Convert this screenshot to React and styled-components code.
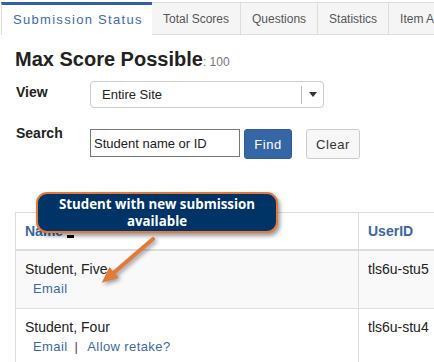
import styled, { createGlobalStyle } from "styled-components";

const GlobalStyle = createGlobalStyle`
  body {
    margin: 0;
    background: #fff;
    font-family: "Liberation Sans", Arial, sans-serif;
    overflow: hidden;
  }
`;

const tabs = ["Total Scores", "Questions", "Statistics", "Item Analysis"];

export default function App() {
  return (
    <Page>
      <GlobalStyle />
      <TabBar>
        <ActiveTab>Submission Status</ActiveTab>
        {tabs.map((t) => (
          <Tab key={t}>{t}</Tab>
        ))}
      </TabBar>

      <Content>
        <Heading>
          Max Score Possible<Small>: 100</Small>
        </Heading>

        <FieldRow>
          <Label $offset={3}>View</Label>
          <Select>
            <SelectText>Entire Site</SelectText>
            <SelectDivider />
            <Caret />
          </Select>
        </FieldRow>

        <FieldRow $gap={21}>
          <Label $offset={-4}>Search</Label>
          <SearchInput defaultValue="Student name or ID" />
          <PrimaryButton>Find</PrimaryButton>
          <DefaultButton>Clear</DefaultButton>
        </FieldRow>

        <Table>
          <colgroup>
            <col style={{ width: 343 }} />
            <col />
          </colgroup>
          <thead>
            <tr>
              <HeadCell>
                Name<SortMark />
              </HeadCell>
              <HeadCell>UserID</HeadCell>
            </tr>
          </thead>
          <tbody>
            <Row $striped>
              <Cell>
                Student, Five
                <Links>
                  <Link>Email</Link>
                </Links>
              </Cell>
              <Cell>tls6u-stu5</Cell>
            </Row>
            <Row>
              <Cell>
                Student, Four
                <Links>
                  <Link>Email</Link>
                  <Pipe>|</Pipe>
                  <Link>Allow retake?</Link>
                </Links>
              </Cell>
              <Cell>tls6u-stu4</Cell>
            </Row>
          </tbody>
        </Table>
      </Content>

      <Callout>
        Student with new submission
        <br />
        available
      </Callout>
      <Arrow viewBox="0 0 75 56" width="75" height="56">
        <line x1="63" y1="5" x2="24" y2="38.4" stroke="#e27a3a" strokeWidth="4" strokeLinecap="round" />
        <polygon points="11.7,48.7 28.5,43.8 19.5,33" fill="#e27a3a" />
      </Arrow>
    </Page>
  );
}

const Page = styled.div`
  position: relative;
  width: 434px;
  height: 362px;
  overflow: hidden;
`;

const TabBar = styled.div`
  display: flex;
  height: 33px;
  margin-top: 2px;
  padding-left: 1px;
  white-space: nowrap;
`;

const ActiveTab = styled.div`
  box-sizing: border-box;
  width: 151px;
  flex-shrink: 0;
  padding: 0 0 2px 11px;
  display: flex;
  align-items: center;
  background: #fff;
  border-top: 3px solid #2f5fa5;
  border-left: 1px solid #ddd;
  color: #3d6ab2;
  font-size: 13px;
  letter-spacing: 1.3px;
`;

const Tab = styled.div`
  flex-shrink: 0;
  padding: 0 11px;
  display: flex;
  align-items: center;
  background: #f5f5f5;
  border: 1px solid #ddd;
  border-left: none;
  color: #555;
  font-size: 12px;
`;

const Content = styled.div`
  padding-left: 15px;
`;

const Heading = styled.h1`
  margin: 12px 0 7px;
  font-size: 20px;
  line-height: 24px;
  letter-spacing: 0;
  font-weight: bold;
  color: #222;
`;

const Small = styled.span`
  font-size: 12px;
  font-weight: normal;
  color: #777;
`;

const FieldRow = styled.div`
  display: flex;
  align-items: flex-start;
  margin-top: ${(p) => p.$gap || 0}px;
`;

const Label = styled.div`
  width: 75px;
  padding-left: 1px;
  box-sizing: border-box;
  margin-top: ${(p) => p.$offset}px;
  font-size: 14px;
  line-height: 17px;
  font-weight: bold;
  color: #222;
`;

const Select = styled.div`
  box-sizing: border-box;
  width: 234px;
  height: 27px;
  display: flex;
  align-items: center;
  border: 1px solid #ccc;
  border-radius: 4px;
  background: #fff;
`;

const SelectText = styled.span`
  flex: 1;
  padding-left: 11px;
  font-size: 13px;
  color: #222;
`;

const SelectDivider = styled.span`
  width: 1px;
  height: 18px;
  background: #bbb;
`;

const Caret = styled.span`
  width: 21px;
  display: flex;
  justify-content: center;
  &::after {
    content: "";
    border-left: 4.5px solid transparent;
    border-right: 4.5px solid transparent;
    border-top: 5px solid #333;
  }
`;

const SearchInput = styled.input`
  box-sizing: border-box;
  width: 150px;
  height: 28px;
  margin: 0;
  padding: 0 3px;
  border: 1px solid #777;
  border-radius: 0;
  font-family: inherit;
  font-size: 13px;
  color: #222;
  outline: none;
`;

const Button = styled.button`
  box-sizing: border-box;
  height: 30px;
  margin: 0;
  border-radius: 3px;
  font-family: inherit;
  font-size: 13px;
  letter-spacing: 0.6px;
  padding: 0;
`;

const PrimaryButton = styled(Button)`
  width: 48px;
  margin-left: 4px;
  background: #3566a6;
  border: 1px solid #2f5c96;
  color: #fff;
`;

const DefaultButton = styled(Button)`
  width: 54px;
  margin-left: 14px;
  background: #f7f7f7;
  border: 1px solid #ccc;
  color: #333;
`;

const Table = styled.table`
  margin-top: 53px;
  width: 480px;
  border-collapse: collapse;
  table-layout: fixed;
  border-top: 1px solid #ddd;
  border-left: 1px solid #ddd;
`;

const HeadCell = styled.th`
  height: 36px;
  padding: 0 9px;
  text-align: left;
  font-size: 14px;
  font-weight: bold;
  color: #3b65a3;
  border-right: 1px solid #ddd;
  border-bottom: 2px solid #ddd;
`;

const SortMark = styled.span`
  display: inline-block;
  width: 7px;
  height: 3px;
  margin-left: 4px;
  background: #000;
  vertical-align: -2px;
`;

const Row = styled.tr`
  background: ${(p) => (p.$striped ? "#f9f9f9" : "#fff")};
`;

const Cell = styled.td`
  height: 40px;
  padding: 8px 9px 9px;
  vertical-align: top;
  font-size: 14px;
  line-height: 20px;
  color: #222;
  border-right: 1px solid #ddd;
  border-bottom: 1px solid #ddd;
`;

const Links = styled.div`
  padding-left: 8px;
  font-size: 13px;
  letter-spacing: 0.4px;
`;

const Link = styled.a`
  color: #3b68a8;
  cursor: pointer;
`;

const Pipe = styled.span`
  margin: 0 9px 0 7px;
  color: #6d2c6d;
`;

const Callout = styled.div`
  position: absolute;
  left: 36px;
  top: 192px;
  box-sizing: border-box;
  width: 242px;
  height: 41px;
  display: flex;
  flex-direction: column;
  justify-content: center;
  align-items: center;
  text-align: center;
  background: #003366;
  border: 2.5px solid #e27a3a;
  border-radius: 11px;
  box-shadow: 2px 3px 4px rgba(0, 0, 0, 0.4);
  color: #fff;
  font-family: "Open Sans", sans-serif;
  font-weight: 700;
  font-size: 13.3px;
  line-height: 17px;
`;

const Arrow = styled.svg`
  position: absolute;
  left: 90px;
  top: 234px;
  filter: drop-shadow(2px 2px 2px rgba(0, 0, 0, 0.4));
`;
